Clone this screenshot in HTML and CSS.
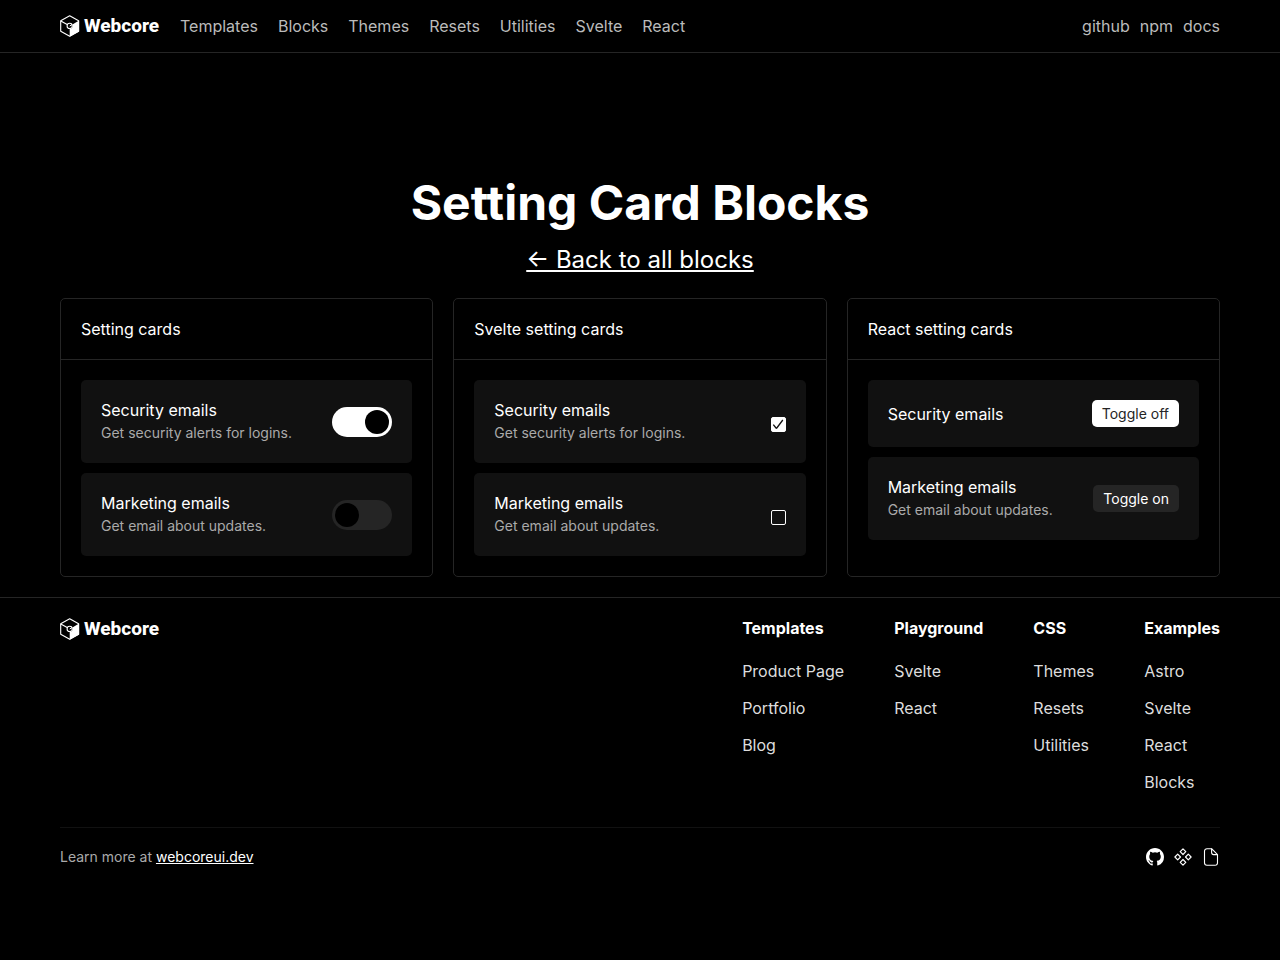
FILE: index.html
```html
<!DOCTYPE html>
<html lang="en">
<head>
<meta charset="utf-8">
<meta name="viewport" content="width=device-width, initial-scale=1">
<title>Setting Card Blocks</title>
<link rel="stylesheet" href="styles.css">
</head>
<body>
<svg class="defs" aria-hidden="true">
  <symbol id="cube" viewBox="0 0 20 22">
    <path d="M9.7 .8 18.6 5.7V16.3L9.7 21.3.7 16.3V5.7Z" fill="none" stroke="#fff" stroke-width="1.1" stroke-linejoin="round"/>
    <path d="M19.1 5.6V16.5L9.7 21.8V14A3.2 3.2 0 0 0 12.4 9.4Z" fill="#fff"/>
    <path d="M.8 5.9 7.2 9.6" stroke="#fff" stroke-width="1.1"/>
    <circle cx="9.7" cy="10.9" r="2.6" fill="#000" stroke="#fff" stroke-width="1.1"/>
    <path d="M9.7 11 12 9.6" stroke="#fff"/>
  </symbol>
</svg>
<header class="header">
  <div class="container header-row">
    <a class="logo" href="#"><svg class="logo-mark" aria-hidden="true"><use href="#cube"/></svg><span>Webcore</span></a>
    <nav class="nav" aria-label="Main">
      <a href="#">Templates</a><a href="#">Blocks</a><a href="#">Themes</a><a href="#">Resets</a><a href="#">Utilities</a><a href="#">Svelte</a><a href="#">React</a>
    </nav>
    <nav class="nav nav-end" aria-label="Project">
      <a href="#">github</a><a href="#">npm</a><a href="#">docs</a>
    </nav>
  </div>
</header>
<main class="container main">
  <h1 class="title">Setting Card Blocks</h1>
  <a class="back" href="#">← Back to all blocks</a>
  <div class="cards">
    <section class="card">
      <h2 class="card-title">Setting cards</h2>
      <div class="card-body">
        <div class="setting">
          <label class="setting-text" for="switch-security"><span>Security emails</span><span class="muted">Get security alerts for logins.</span></label>
          <input class="switch" type="checkbox" role="switch" id="switch-security" checked>
        </div>
        <div class="setting">
          <label class="setting-text" for="switch-marketing"><span>Marketing emails</span><span class="muted">Get email about updates.</span></label>
          <input class="switch" type="checkbox" role="switch" id="switch-marketing">
        </div>
      </div>
    </section>
    <section class="card">
      <h2 class="card-title">Svelte setting cards</h2>
      <div class="card-body">
        <div class="setting">
          <label class="setting-text" for="check-security"><span>Security emails</span><span class="muted">Get security alerts for logins.</span></label>
          <span class="check"><input type="checkbox" id="check-security" checked><svg viewBox="0 0 15 15" aria-hidden="true"><path d="M2.3 7.6 5 11Q5.4 11.4 5.8 11L11.8 3" fill="none" stroke="#111" stroke-width="1.3"/></svg></span>
        </div>
        <div class="setting">
          <label class="setting-text" for="check-marketing"><span>Marketing emails</span><span class="muted">Get email about updates.</span></label>
          <span class="check"><input type="checkbox" id="check-marketing"></span>
        </div>
      </div>
    </section>
    <section class="card">
      <h2 class="card-title">React setting cards</h2>
      <div class="card-body">
        <div class="setting">
          <div class="setting-text"><span>Security emails</span></div>
          <button class="button" type="button">Toggle off</button>
        </div>
        <div class="setting">
          <div class="setting-text"><span>Marketing emails</span><span class="muted">Get email about updates.</span></div>
          <button class="button button-dark" type="button">Toggle on</button>
        </div>
      </div>
    </section>
  </div>
</main>
<footer class="footer">
  <div class="container">
    <div class="footer-top">
      <a class="logo" href="#"><svg class="logo-mark" aria-hidden="true"><use href="#cube"/></svg><span>Webcore</span></a>
      <div class="columns">
        <div class="column"><strong>Templates</strong><ul><li><a href="#">Product Page</a></li><li><a href="#">Portfolio</a></li><li><a href="#">Blog</a></li></ul></div>
        <div class="column"><strong>Playground</strong><ul><li><a href="#">Svelte</a></li><li><a href="#">React</a></li></ul></div>
        <div class="column"><strong>CSS</strong><ul><li><a href="#">Themes</a></li><li><a href="#">Resets</a></li><li><a href="#">Utilities</a></li></ul></div>
        <div class="column"><strong>Examples</strong><ul><li><a href="#">Astro</a></li><li><a href="#">Svelte</a></li><li><a href="#">React</a></li><li><a href="#">Blocks</a></li></ul></div>
      </div>
    </div>
    <div class="footer-bottom">
      <span class="muted">Learn more at <a href="#">webcoreui.dev</a></span>
      <div class="icons">
        <a href="#" aria-label="GitHub"><svg viewBox="0 0 16 16"><path fill="currentColor" d="M8 0C3.58 0 0 3.58 0 8c0 3.54 2.29 6.53 5.47 7.59.4.07.55-.17.55-.38 0-.19-.01-.82-.01-1.49-2.01.37-2.53-.49-2.69-.94-.09-.23-.48-.94-.82-1.13-.28-.15-.68-.52-.01-.53.63-.01 1.08.58 1.23.82.72 1.21 1.87.87 2.33.66.07-.52.28-.87.51-1.07-1.78-.2-3.64-.89-3.64-3.95 0-.87.31-1.59.82-2.15-.08-.2-.36-1.02.08-2.12 0 0 .67-.21 2.2.82a7.6 7.6 0 0 1 4 0c1.53-1.04 2.2-.82 2.2-.82.44 1.1.16 1.92.08 2.12.51.56.82 1.27.82 2.15 0 3.07-1.87 3.75-3.65 3.95.29.25.54.73.54 1.48 0 1.07-.01 1.93-.01 2.2 0 .21.15.46.55.38A8.01 8.01 0 0 0 16 8c0-4.42-3.58-8-8-8Z"/></svg></a>
        <a href="#" aria-label="Components"><svg viewBox="0 0 18 18"><path fill="none" stroke="currentColor" stroke-width="1.2" stroke-linejoin="round" d="M9 .9 11.8 3.7 9 6.5 6.2 3.7ZM9 11.5 11.8 14.3 9 17.1 6.2 14.3ZM3.7 6.2 6.5 9 3.7 11.8.9 9ZM14.3 6.2 17.1 9 14.3 11.8 11.5 9Z"/></svg></a>
        <a href="#" aria-label="Documentation"><svg viewBox="0 0 18 18"><path fill="none" stroke="currentColor" stroke-width="1.1" stroke-linejoin="round" d="M9.6.7H5A2.5 2.5 0 0 0 2.5 3.2V14.8A2.5 2.5 0 0 0 5 17.3H13A2.5 2.5 0 0 0 15.5 14.8V6.6L9.6.7V4.6A2 2 0 0 0 11.6 6.6H15.5"/></svg></a>
      </div>
    </div>
  </div>
</footer>
</body>
</html>
```
FILE: styles.css
```css
* { box-sizing: border-box; }
body {
  margin: 0;
  background: #000;
  color: #fff;
  font: 16px/20px Inter, "Liberation Sans", sans-serif;
}
a { color: inherit; text-decoration: none; }
svg { display: block; }
.defs { display: none; }
.container { max-width: 1200px; margin: 0 auto; padding: 0 20px; }

.header { border-bottom: 1px solid #252525; }
.header-row { display: flex; align-items: center; gap: 20px; min-height: 52px; }
.logo {
  display: flex;
  align-items: center;
  gap: 4px;
  min-width: 100px;
  font: 800 19px/22px Roboto, sans-serif;
}
.logo-mark { width: 20px; height: 22px; }
.nav { display: flex; gap: 20px; color: #bbb; }
.nav-end { gap: 10px; margin-left: auto; }

.main { display: flex; flex-direction: column; padding-top: 120px; padding-bottom: 20px; }
.title { margin: 0 0 12px; font-size: 48px; font-weight: 750; line-height: 60px; text-align: center; }
.back { align-self: center; margin-bottom: 23px; font-size: 24px; line-height: 30px; text-decoration: underline; }
.cards { display: grid; grid-template-columns: repeat(3, 1fr); gap: 20px; }
.card { border: 1px solid #252525; border-radius: 5px; }
.card-title { margin: 0; padding: 20px; border-bottom: 1px solid #252525; font-size: 16px; font-weight: 400; }
.card-body { display: grid; gap: 10px; padding: 20px; align-content: start; }
.setting {
  display: flex;
  align-items: center;
  justify-content: space-between;
  gap: 20px;
  padding: 20px;
  border-radius: 5px;
  background: #111;
}
.setting-text { display: grid; gap: 3px; }
.muted { color: #aaa; font-size: 14px; }

.switch {
  appearance: none;
  flex: none;
  display: flex;
  width: 60px;
  height: 30px;
  margin: 0;
  padding: 3px;
  border-radius: 15px;
  background: #252525;
}
.switch::before { content: ""; width: 24px; height: 24px; border-radius: 50%; background: #000; }
.switch:checked { justify-content: flex-end; background: #fff; }

.check { display: grid; padding-top: 6px; }
.check > * { grid-area: 1 / 1; width: 15px; height: 15px; }
.check svg { pointer-events: none; }
.check input { appearance: none; margin: 0; border: 1px solid #fff; border-radius: 2px; }
.check input:checked { background: #fff; }

.button {
  padding: 5px 10px;
  border: 0;
  border-radius: 5px;
  background: #fff;
  color: #252525;
  font: 14px/17px Inter, sans-serif;
}
.button-dark { background: #252525; color: #fff; }

.footer { border-top: 1px solid #252525; }
.footer-top {
  display: flex;
  align-items: flex-start;
  justify-content: space-between;
  padding: 20px 0 31px;
}
.columns { display: flex; gap: 50px; }
.column ul { display: grid; gap: 10px; margin: 20px 0 0; padding: 0; list-style: none; color: #ddd; line-height: 27px; }
.column strong { display: block; }
.footer-bottom {
  display: flex;
  align-items: center;
  justify-content: space-between;
  padding: 19px 0;
  border-top: 1px solid #111;
}
.footer-bottom .muted a { color: #fff; text-decoration: underline; }
.icons { display: flex; gap: 10px; }
.icons svg { width: 18px; height: 18px; }
```
